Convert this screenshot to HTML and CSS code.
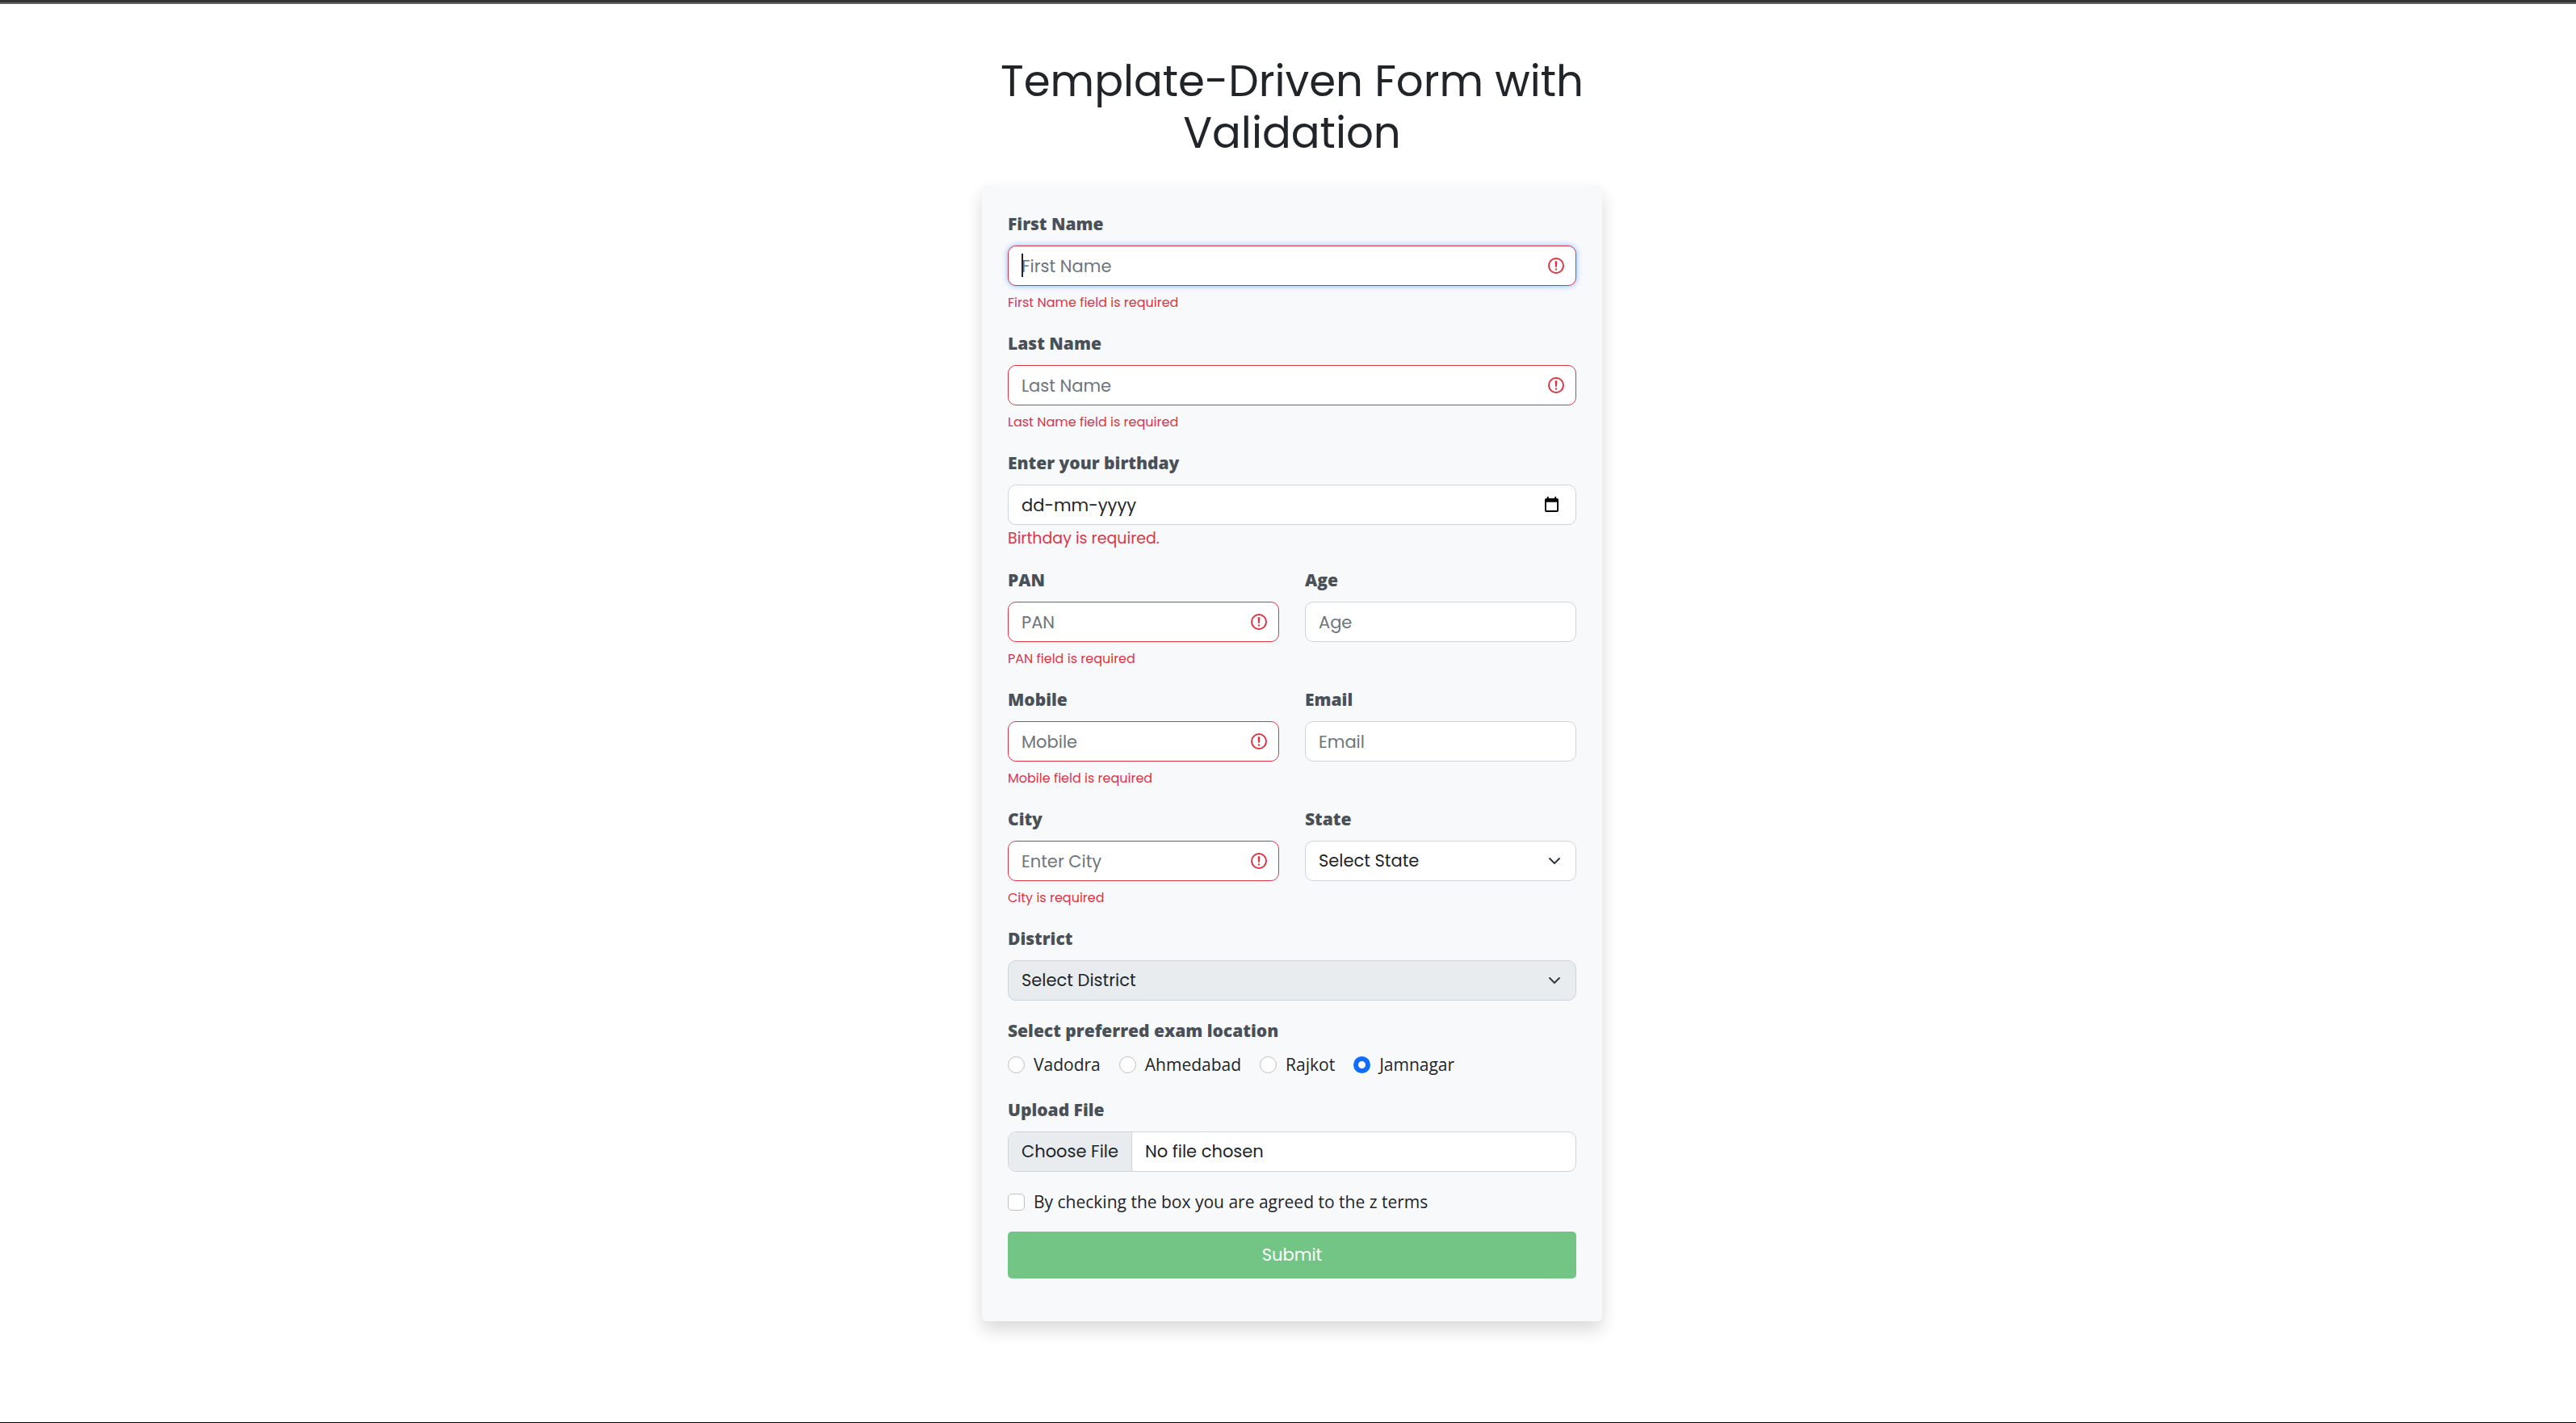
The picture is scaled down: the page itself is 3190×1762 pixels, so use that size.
FILE: index.html
```html
<!DOCTYPE html>
<html lang="en">
<head>
<meta charset="utf-8">
<title>Template-Driven Form with Validation</title>
<link rel="stylesheet" href="styles.css">
</head>
<body>
<svg width="0" height="0" class="sprite" aria-hidden="true">
  <symbol id="alert" viewBox="0 0 12 12">
    <g fill="none" stroke="#dc3545"><circle cx="6" cy="6" r="4.5"/><path stroke-linejoin="round" d="M5.8 3.6h.4L6 6.5z"/><circle cx="6" cy="8.2" r=".6" fill="#dc3545" stroke="none"/></g>
  </symbol>
  <symbol id="chevron" viewBox="0 0 16 16">
    <path fill="none" stroke="#343a40" stroke-linecap="round" stroke-linejoin="round" stroke-width="2" d="m2 5 6 6 6-6"/>
  </symbol>
  <symbol id="calendar" viewBox="0 0 18 20">
    <path fill="#000" fill-rule="evenodd" d="M3 0h2v2h8V0h2v2h1a2 2 0 0 1 2 2v14a2 2 0 0 1-2 2H2a2 2 0 0 1-2-2V4a2 2 0 0 1 2-2h1zM2 7v11h14V7z"/>
  </symbol>
</svg>
<main class="page">
  <div class="container">
    <h1 class="title">Template-Driven Form with Validation</h1>
    <form class="panel">
      <div class="group">
        <label class="label" for="first">First Name</label>
        <div class="control">
          <input class="input invalid focused" id="first" type="text" placeholder="First Name">
          <span class="caret"></span>
          <svg class="alert"><use href="#alert"/></svg>
        </div>
        <p class="error">First Name field is required</p>
      </div>
      <div class="group">
        <label class="label" for="last">Last Name</label>
        <div class="control">
          <input class="input invalid" id="last" type="text" placeholder="Last Name">
          <svg class="alert"><use href="#alert"/></svg>
        </div>
        <p class="error">Last Name field is required</p>
      </div>
      <div class="group">
        <label class="label" for="birthday">Enter your birthday</label>
        <div class="control">
          <input class="input date" id="birthday" type="text" placeholder="dd-mm-yyyy">
          <svg class="calendar"><use href="#calendar"/></svg>
        </div>
        <p class="error error-large">Birthday is required.</p>
      </div>
      <div class="row">
        <div class="group">
          <label class="label" for="pan">PAN</label>
          <div class="control">
            <input class="input invalid" id="pan" type="text" placeholder="PAN">
            <svg class="alert"><use href="#alert"/></svg>
          </div>
          <p class="error">PAN field is required</p>
        </div>
        <div class="group">
          <label class="label" for="age">Age</label>
          <input class="input" id="age" type="text" placeholder="Age">
        </div>
      </div>
      <div class="row">
        <div class="group">
          <label class="label" for="mobile">Mobile</label>
          <div class="control">
            <input class="input invalid" id="mobile" type="text" placeholder="Mobile">
            <svg class="alert"><use href="#alert"/></svg>
          </div>
          <p class="error">Mobile field is required</p>
        </div>
        <div class="group">
          <label class="label" for="email">Email</label>
          <input class="input" id="email" type="email" placeholder="Email">
        </div>
      </div>
      <div class="row">
        <div class="group">
          <label class="label" for="city">City</label>
          <div class="control">
            <input class="input invalid" id="city" type="text" placeholder="Enter City">
            <svg class="alert"><use href="#alert"/></svg>
          </div>
          <p class="error">City is required</p>
        </div>
        <div class="group">
          <label class="label" for="state">State</label>
          <div class="control">
            <select class="input" id="state"><option>Select State</option></select>
            <svg class="chevron"><use href="#chevron"/></svg>
          </div>
        </div>
      </div>
      <div class="group">
        <label class="label" for="district">District</label>
        <div class="control">
          <select class="input" id="district" disabled><option>Select District</option></select>
          <svg class="chevron"><use href="#chevron"/></svg>
        </div>
      </div>
      <fieldset class="group locations">
        <legend class="label">Select preferred exam location</legend>
        <div class="choices">
          <label class="choice"><input type="radio" name="location">Vadodra</label>
          <label class="choice"><input type="radio" name="location">Ahmedabad</label>
          <label class="choice"><input type="radio" name="location">Rajkot</label>
          <label class="choice"><input type="radio" name="location" checked>Jamnagar</label>
        </div>
      </fieldset>
      <div class="group">
        <label class="label" for="file">Upload File</label>
        <input class="input file" id="file" type="file">
      </div>
      <div class="group">
        <label class="choice"><input type="checkbox">By checking the box you are agreed to the z terms</label>
      </div>
      <div class="group">
        <button class="submit" type="submit" disabled>Submit</button>
      </div>
    </form>
  </div>
</main>
</body>
</html>
```
FILE: styles.css
```css
* { box-sizing: border-box; }
body {
  margin: 0;
  min-height: 100vh;
  border-top: 3px solid #333;
  border-bottom: 1px solid #000;
  background: #fff;
  color: #212529;
  font-family: "Poppins", "Inter", sans-serif;
  font-size: 21px;
  line-height: 32px;
}
.sprite { position: absolute; }
.page {
  border-top: 2px solid #666;
  padding: 64px 0 64px 10px;
}
.container { max-width: 768px; margin: 0 auto; }
.title {
  margin: 0 0 32px;
  font-size: 53px;
  font-weight: 400;
  line-height: 64px;
  text-align: center;
}
.panel {
  padding: 32px;
  border-radius: 6px;
  background: #f8f9fb;
  box-shadow: 0 11px 21px rgba(0, 0, 0, .15);
}
.group { margin: 0 0 21px; }
.row { display: grid; grid-template-columns: 1fr 1fr; column-gap: 32px; }
.label {
  display: block;
  margin-bottom: 11px;
  padding: 0;
  color: #495057;
  font-family: "Open Sans", sans-serif;
  font-weight: 800;
}
.control { position: relative; }
.input {
  display: block;
  width: 100%;
  height: 50px;
  padding: 8px 16px;
  border: 1px solid #ced4da;
  border-radius: 10px;
  outline: 0;
  background: #fff;
  color: #212529;
  font: inherit;
  appearance: none;
}
.input::placeholder { color: #6c757d; opacity: 1; }
.date::placeholder { color: #212529; }
.input:disabled { background: #e9ecef; opacity: 1; }
.invalid { border-color: #dc3545; padding-right: 48px; }
.focused { box-shadow: 0 0 7px rgba(0, 123, 255, .5); }
.caret { position: absolute; left: 17px; top: 10px; width: 2px; height: 29px; background: #212529; }
.alert { position: absolute; right: 13px; top: 13px; width: 24px; height: 24px; }
.chevron { position: absolute; right: 19px; top: 17px; width: 16px; height: 16px; pointer-events: none; }
.calendar { position: absolute; right: 22px; top: 15px; width: 17px; height: 19px; }
.error { margin: 8px 0 0; color: #dc3545; font-size: 16px; line-height: 26px; }
.error-large { margin-top: 2px; font-size: 19px; line-height: 29px; }
.locations { margin-bottom: 24px; padding: 0; border: 0; }
.locations .label { margin-bottom: 10px; }
.choices { display: flex; flex-wrap: wrap; gap: 23px; }
.choice { display: flex; align-items: center; gap: 11px; font-family: "Open Sans", sans-serif; }
.choice input {
  flex: none;
  width: 21px;
  height: 21px;
  margin: 0;
  border: 1px solid #bfbfbf;
  background: #fff;
  appearance: none;
}
.choice input[type="radio"] { border-radius: 50%; }
.choice input[type="checkbox"] { border-radius: 5px; }
.choice input:checked { border: 6px solid #0d6efd; }
.file { overflow: hidden; }
.file::file-selector-button {
  height: 48px;
  margin: -8px 16px -8px -16px;
  padding: 8px 16px;
  border: 0;
  border-right: 1px solid #ced4da;
  background: #e9ecef;
  color: #212529;
  font: inherit;
}
.submit {
  display: block;
  width: 100%;
  height: 58px;
  border: 0;
  border-radius: 5px;
  background: #73c586;
  color: #fff;
  font: inherit;
}
```
